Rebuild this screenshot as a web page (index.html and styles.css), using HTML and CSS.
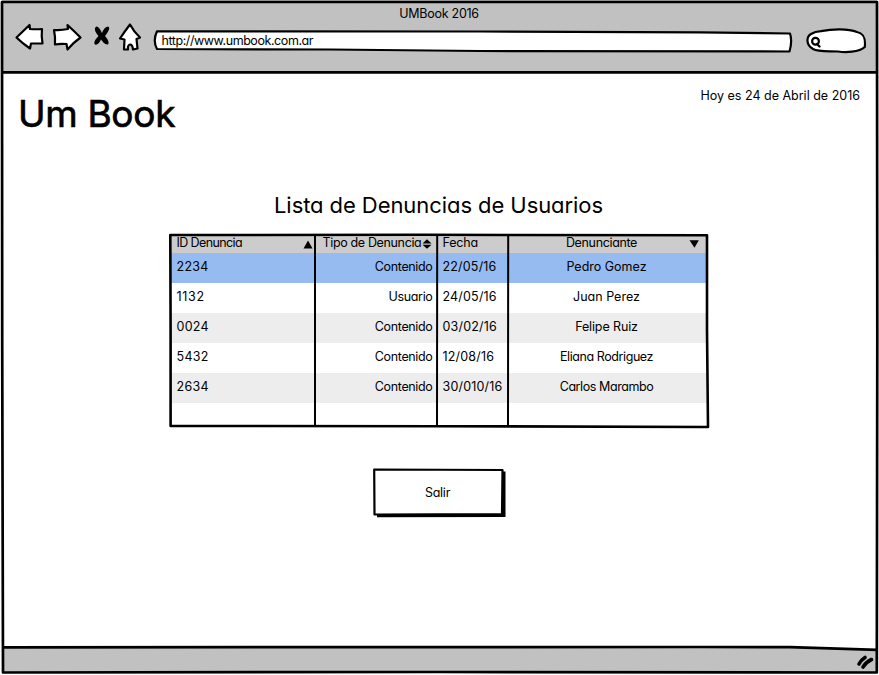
FILE: index.html
```html
<!DOCTYPE html>
<html lang="es">
<head>
<meta charset="utf-8">
<title>UMBook 2016</title>
<link rel="stylesheet" href="styles.css">
</head>
<body>
<div class="window">
  <header class="chrome">
    <div class="title">UMBook 2016</div>
    <div class="toolbar">
      <svg class="nav" width="130" height="30" viewBox="14 22 130 30">
        <g fill="#fff" stroke="#000" stroke-width="2.2" stroke-linejoin="round" stroke-linecap="round">
          <path d="M16.500 37.500 L29.500 25 L30 29 Q36 29.500 42 29 Q41.200 36 42.500 43.500 L31 43.500 L30 48.500 Q22 43 16.500 37.500Z"/>
          <path d="M54 30 Q61 30.500 68 29 L67.500 25 Q74 31 80.500 37.500 Q74 42 67.500 49.500 L66.500 44 Q60 43.500 55 44.500 Q55.500 37 54 30Z"/>
          <path d="M130 24.500 Q134 32 140 37.500 L136.500 39 L137.500 48.500 L133 49.500 Q132.500 44.500 130 44.500 Q127.500 45 128 49.500 L124 49.500 L124.500 39.500 L120 38.500 Q125 31 130 24.500Z"/>
        </g>
        <path d="M96.500 26.500 C99.500 27 101 31 102 33 C103 30 105 27 108 26.500 C110.500 27.500 109 31 105 36 C108 39 109.500 43 108 44.500 C105 45 103 42 101 39.500 C99.500 43 97 45.500 95 44.500 C93 43 95.500 39 98.500 36 C95 32 93.500 28 96.500 26.500Z"/>
      </svg>
      <div class="address">
        <svg class="outline" width="642" height="24" viewBox="152 29 642 24"><path d="M157 31.300 L480 31.500 L700 32.300 L790 33.500 Q792.500 41 789.500 51.500 L480 51 L330 49.500 L157 49 Q152.500 41 157 31.300Z"/></svg>
        <span class="url">http://www.umbook.com.ar</span>
      </div>
      <svg class="search" width="62" height="28" viewBox="805 27 62 28">
        <path class="field" d="M821 31.200 C832 29 848 28.500 857 32 C865 33.500 865.500 40 864.800 47 C859 52.500 845 52.500 838 51.500 C828 51 818 52 813 49 C806 45 806 37 811 34 Q815 31.500 821 31.200Z"/>
        <circle class="lens" cx="815.5" cy="41.300" r="3.400"/>
        <path class="handle" d="M817 44 L819.500 46.500"/>
      </svg>
    </div>
  </header>

  <main class="page">
    <div class="masthead">
      <h1>Um Book</h1>
      <p class="date">Hoy es 24 de Abril de 2016</p>
    </div>
    <h2>Lista de Denuncias de Usuarios</h2>
    <div class="grid">
      <table>
        <colgroup><col class="c-id"><col class="c-type"><col class="c-date"><col class="c-name"></colgroup>
        <thead>
          <tr>
            <th class="id"><div class="head">ID Denuncia<svg width="10" height="9" viewBox="0 0 10 9"><path d="M5 .5 L9.500 8.500 H.5Z"/></svg></div></th>
            <th class="type"><div class="head">Tipo de Denuncia<svg width="10" height="10" viewBox="0 0 10 10"><path d="M5 .3 L9.500 4.500 H.5Z M.5 5.700 H9.500 L5 9.800Z"/></svg></div></th>
            <th class="date-h">Fecha</th>
            <th class="name"><div class="head"><span>Denunciante</span><svg width="10" height="8" viewBox="0 0 10 8"><path d="M.5 .3 H9.800 L5.500 7.800Z"/></svg></div></th>
          </tr>
        </thead>
        <tbody>
          <tr class="selected"><td class="num">2234</td><td class="type">Contenido</td><td class="day">22/05/16</td><td class="name">Pedro Gomez</td></tr>
          <tr><td class="num ones">1132</td><td class="type">Usuario</td><td class="day">24/05/16</td><td class="name">Juan Perez</td></tr>
          <tr class="alt"><td class="num">0024</td><td class="type">Contenido</td><td class="day">03/02/16</td><td class="name snug">Felipe Ruiz</td></tr>
          <tr><td class="num">5432</td><td class="type">Contenido</td><td class="day">12/08/16</td><td class="name tight">Eliana Rodriguez</td></tr>
          <tr class="alt"><td class="num">2634</td><td class="type">Contenido</td><td class="day">30/010/16</td><td class="name tight">Carlos Marambo</td></tr>
        </tbody>
      </table>
      <svg class="rules" width="544" height="198" viewBox="167 232 544 198">
        <path d="M170.300 235 L420 234.800 L707 235.300 L707 330 L708 427 L440 426.200 L170.600 426 L170.600 330Z" stroke-width="2.600"/>
        <path d="M315 236 V425 M437.200 236 L437 425 M508.200 236 L508 425" stroke-width="2"/>
      </svg>
    </div>
    <button class="exit">
      <svg class="outline" width="134" height="50" viewBox="372 468 134 50">
        <path class="shadow" d="M377 470 L505.500 471.500 L505.500 517 L377 517.300Z"/>
        <path d="M374.200 469.500 L502.500 470 L502 514 L374.500 514.500Z"/>
      </svg>
      <span>Salir</span>
    </button>
  </main>

  <svg class="frame" width="879" height="675" viewBox="0 0 879 675">
    <path class="status" d="M3 647.500 L785 647 L877 650.500 V672 L3 672.500Z"/>
    <path class="line" d="M2 2 L877 2 L877.300 340 L876.800 672.500 L440 672 L3 672.500 L2.200 340Z"/>
    <path class="line" d="M3 72.300 L877 72.400 M3 647.300 L700 647 L790 647.200 L877 649.800"/>
    <path class="grip" d="M859 664 Q861 660 865 657.500 M863 667 Q866 662 871.500 659.500"/>
  </svg>
</div>
</body>
</html>
```
FILE: styles.css
```css
* { box-sizing: border-box; margin: 0; padding: 0; }

body {
  width: 879px;
  height: 675px;
  overflow: hidden;
  background: #fff;
  color: #000;
  font: 400 12.5px/18px Inter, "Liberation Sans", sans-serif;
  font-feature-settings: "cv11";
}

svg { display: block; flex: none; }

.window { position: relative; height: 675px; }

.frame { position: absolute; inset: 0; pointer-events: none; }
.frame .line { fill: none; stroke: #000; stroke-width: 2.7; stroke-linejoin: round; }
.frame .status { fill: #c1c1c1; }
.frame .grip { fill: none; stroke: #000; stroke-width: 3.6; stroke-linecap: round; }

.chrome { height: 73px; margin: 0 2px; background: #c1c1c1; }
.title { height: 22px; padding: 5px 1px 0 0; text-align: center; letter-spacing: -.25px; }
.toolbar { display: flex; padding-left: 12px; }
.address { position: relative; width: 642px; margin: 7px 11px 0 8px; }
.outline { fill: #fff; stroke: #000; stroke-width: 2.2; stroke-linejoin: round; }
.url { position: absolute; left: 9.500px; top: 3px; letter-spacing: -.43px; }
.search { margin-top: 5px; }
.search .field { fill: #fff; stroke: #000; stroke-width: 2.2; }
.search .lens { fill: none; stroke: #000; stroke-width: 2.2; }
.search .handle { stroke: #000; stroke-width: 2.4; stroke-linecap: round; }

.page { display: flex; flex-direction: column; align-items: center; padding-right: 2px; }
.masthead { align-self: stretch; display: flex; justify-content: space-between; padding: 14px 17px 0 18px; }
h1 { font-size: 37px; font-weight: 400; line-height: 53px; letter-spacing: -.3px; -webkit-text-stroke: .7px #000; }
h2 { margin-top: 50px; font-size: 22px; font-weight: 400; line-height: 30px; letter-spacing: -.07px; }

.grid { position: relative; width: 536px; height: 191px; margin-top: 16px; }
.rules { position: absolute; left: -4px; top: -4px; fill: none; stroke: #000; stroke-linejoin: round; }
table { width: 536px; table-layout: fixed; border-collapse: collapse; }
.c-id { width: 144px; }
.c-type { width: 122px; }
.c-date { width: 71px; }
.c-name { width: 199px; }
th { height: 17px; padding: 0 5px 3px 6px; background: #ccc; font-weight: 400; line-height: 14px; text-align: left; }
td { height: 30px; padding: 0 5px 2px 6px; }
.head { display: flex; justify-content: space-between; align-items: center; }
.head svg { position: relative; top: 1px; }
.selected { background: #95bbf1; }
.alt { background: #ededed; }

th.id { padding-right: 2px; letter-spacing: -.6px; }
th.type { padding: 0 5px 3px 8px; letter-spacing: -.35px; }
th.date-h { letter-spacing: -.15px; }
th.name { padding: 0 8px 3px 7px; letter-spacing: -.35px; }
th.name span { flex: 1; text-align: center; }
td.num { letter-spacing: .3px; }
td.ones { letter-spacing: .7px; }
td.type { padding-right: 4px; text-align: right; letter-spacing: -.35px; }
td.day { letter-spacing: .18px; }
td.name { padding: 0 6px 2px 5px; text-align: center; }
td.snug { letter-spacing: -.12px; }
td.tight { letter-spacing: -.42px; }

.exit {
  position: relative;
  width: 134px;
  height: 50px;
  margin-top: 41px;
  border: 0;
  background: none;
  color: inherit;
  font: inherit;
  font-feature-settings: inherit;
  letter-spacing: -.25px;
}
.exit .outline { position: absolute; inset: 0; }
.exit .shadow { fill: #000; stroke: none; }
.exit span { position: relative; left: -1px; }
```
